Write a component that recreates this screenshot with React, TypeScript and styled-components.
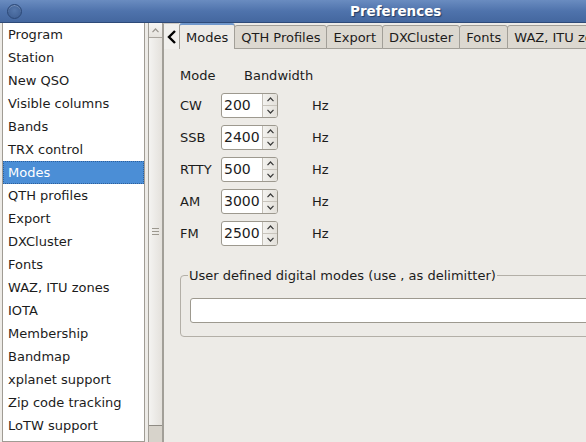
import styled, { createGlobalStyle } from "styled-components"

const GlobalStyle = createGlobalStyle`
  html, body {
    margin: 0;
    padding: 0;
    background: #edebe7;
    overflow: hidden;
  }
  body {
    font-family: "DejaVu Sans", "Liberation Sans", sans-serif;
    font-size: 13px;
    color: #1c1c1c;
  }
`

const pages = [
  "Program",
  "Station",
  "New QSO",
  "Visible columns",
  "Bands",
  "TRX control",
  "Modes",
  "QTH profiles",
  "Export",
  "DXCluster",
  "Fonts",
  "WAZ, ITU zones",
  "IOTA",
  "Membership",
  "Bandmap",
  "xplanet support",
  "Zip code tracking",
  "LoTW support",
]

const tabs = ["Modes", "QTH Profiles", "Export", "DXCluster", "Fonts", "WAZ, ITU zones"]

const modes = [
  { name: "CW", bw: "200" },
  { name: "SSB", bw: "2400" },
  { name: "RTTY", bw: "500" },
  { name: "AM", bw: "3000" },
  { name: "FM", bw: "2500" },
]

const Chevron = ({ up }: { up?: boolean }) => (
  <svg width="7" height="5" viewBox="0 0 7 5">
    <path
      d={up ? "M0.5 4.2 L3.5 1 L6.5 4.2" : "M0.5 0.8 L3.5 4 L6.5 0.8"}
      fill="none"
      stroke="#3a3a3a"
      strokeWidth="1.2"
    />
  </svg>
)

const App = () => {
  return (
    <Window>
      <GlobalStyle />
      <TitleBar>
        <MenuDot />
        <Title>Preferences</Title>
      </TitleBar>
      <Body>
        <PageList>
          {pages.map((p) => (
            <PageItem key={p} $selected={p === "Modes"}>
              {p}
            </PageItem>
          ))}
        </PageList>
        <ScrollBar>
          <ScrollButton>
            <Chevron up />
          </ScrollButton>
          <Thumb>
            <Grip>
              <span />
              <span />
              <span />
            </Grip>
          </Thumb>
          <Trough />
        </ScrollBar>
        <Notebook>
          <TabRow>
            <TabArrow>
              <svg width="10" height="14" viewBox="0 0 10 14">
                <path d="M8 1 L2 7 L8 13" fill="none" stroke="#000" strokeWidth="2.4" />
              </svg>
            </TabArrow>
            {tabs.map((t, i) => (
              <Tab key={t} $active={i === 0}>
                {t}
              </Tab>
            ))}
          </TabRow>
          <Panel>
            <HeaderRow>
              <HeadMode>Mode</HeadMode>
              <span>Bandwidth</span>
            </HeaderRow>
            <ModeGrid>
              {modes.map((m) => (
                <ModeRow key={m.name}>
                  <ModeLabel>{m.name}</ModeLabel>
                  <SpinBox>
                    <SpinInput>{m.bw}</SpinInput>
                    <SpinButtons>
                      <SpinHalf>
                        <Chevron up />
                      </SpinHalf>
                      <SpinHalf>
                        <Chevron />
                      </SpinHalf>
                    </SpinButtons>
                  </SpinBox>
                  <Unit>Hz</Unit>
                </ModeRow>
              ))}
            </ModeGrid>
            <Group>
              <legend>User defined digital modes (use , as delimitter)</legend>
              <TextField />
            </Group>
          </Panel>
        </Notebook>
      </Body>
    </Window>
  )
}

export default App

const Window = styled.div`
  width: 586px;
  height: 442px;
  display: flex;
  flex-direction: column;
  overflow: hidden;
  background: #edebe7;
`

const TitleBar = styled.div`
  height: 23px;
  flex: none;
  display: flex;
  align-items: center;
  padding-left: 7px;
  background: linear-gradient(#6a8cc0, #4f73ac 50%, #44679f 100%);
  border-bottom: 1px solid #2e4a78;
  box-sizing: border-box;
`

const MenuDot = styled.div`
  width: 13px;
  height: 13px;
  border-radius: 50%;
  background: radial-gradient(circle at 50% 40%, #5577ab, #3c5c90);
  border: 1px solid #2c4876;
  box-shadow: inset 0 1px 0 rgba(255, 255, 255, 0.25);
`

const Title = styled.div`
  margin-left: 328px;
  color: #fff;
  font-weight: bold;
  font-size: 13.5px;
  text-shadow: 1px 1px 1px #243d66;
`

const Body = styled.div`
  flex: 1;
  display: flex;
  min-height: 0;
`

const PageList = styled.div`
  width: 143px;
  margin-left: 2px;
  flex: none;
  background: #fff;
  border: 1px solid #a09c94;
  border-top: none;
  display: flex;
  flex-direction: column;
  box-sizing: border-box;
`

const PageItem = styled.div<{ $selected?: boolean }>`
  height: 23px;
  line-height: 23px;
  padding-left: 5px;
  white-space: nowrap;
  box-sizing: border-box;
  background: ${(p) => (p.$selected ? "#4b8ed6" : "transparent")};
  color: ${(p) => (p.$selected ? "#fff" : "#1c1c1c")};
  outline: ${(p) => (p.$selected ? "1px dotted #2d5f9a" : "none")};
  outline-offset: -1px;
`

const ScrollBar = styled.div`
  width: 13px;
  margin-left: 3px;
  flex: none;
  display: flex;
  flex-direction: column;
  border-left: 1px solid #a29f98;
  border-right: 1px solid #a29f98;
  background: #d7d3cb;
`

const ScrollButton = styled.div`
  height: 15px;
  display: flex;
  align-items: center;
  justify-content: center;
  background: linear-gradient(#f7f6f4, #e6e3de);
  border-bottom: 1px solid #aaa69f;
  box-sizing: border-box;
  svg path {
    stroke: #9a968f;
  }
`

const Thumb = styled.div`
  height: 388px;
  display: flex;
  align-items: center;
  justify-content: center;
  background: linear-gradient(90deg, #f4f3f1, #e4e1dc);
  border-bottom: 1px solid #8f8b84;
  box-sizing: border-box;
`

const Grip = styled.div`
  display: flex;
  flex-direction: column;
  gap: 2px;
  span {
    display: block;
    width: 7px;
    height: 1px;
    background: #9c988f;
  }
`

const Trough = styled.div`
  flex: 1;
`

const Notebook = styled.div`
  flex: 1;
  display: flex;
  flex-direction: column;
  min-width: 0;
`

const TabRow = styled.div`
  height: 26px;
  flex: none;
  display: flex;
  align-items: flex-end;
  white-space: nowrap;
`

const TabArrow = styled.div`
  width: 16px;
  height: 26px;
  flex: none;
  display: flex;
  align-items: center;
  justify-content: center;
  background: #f1f0ed;
  border-left: 1px solid #a29f98;
  border-top: 1px solid #cfcbc4;
  box-sizing: border-box;
`

const Tab = styled.div<{ $active?: boolean }>`
  flex: none;
  height: ${(p) => (p.$active ? "26px" : "24px")};
  line-height: ${(p) => (p.$active ? "26px" : "23px")};
  padding: 0 6px;
  box-sizing: border-box;
  background: ${(p) => (p.$active ? "#edebe7" : "#dcd8d0")};
  border: 1px solid #a29f98;
  border-bottom: ${(p) => (p.$active ? "none" : "1px solid #a29f98")};
  border-top: ${(p) => (p.$active ? "2px solid #6f97cc" : "1px solid #a29f98")};
  border-radius: 3px 3px 0 0;
  margin-right: -1px;
  color: #1c1c1c;
`

const Panel = styled.div`
  flex: 1;
  border-left: 1px solid #a29f98;
  padding: 17px 0 0 16px;
  display: flex;
  flex-direction: column;
`

const HeaderRow = styled.div`
  display: flex;
  height: 18px;
  align-items: center;
`

const HeadMode = styled.span`
  width: 64px;
`

const ModeGrid = styled.div`
  display: flex;
  flex-direction: column;
  gap: 7px;
  margin-top: 9px;
`

const ModeRow = styled.div`
  display: flex;
  align-items: center;
  height: 25px;
`

const ModeLabel = styled.span`
  width: 41px;
`

const SpinBox = styled.div`
  display: flex;
  height: 25px;
  width: 57px;
  border: 1px solid #9d998f;
  border-radius: 3px;
  background: #fff;
  box-sizing: border-box;
  overflow: hidden;
`

const SpinInput = styled.div`
  flex: 1;
  line-height: 23px;
  padding-left: 2px;
  font-size: 14px;
`

const SpinButtons = styled.div`
  width: 14px;
  display: flex;
  flex-direction: column;
  border-left: 1px solid #c3bfb7;
  background: linear-gradient(90deg, #f3f2ef, #e3e0da);
`

const SpinHalf = styled.div`
  flex: 1;
  display: flex;
  align-items: center;
  justify-content: center;
  & + & {
    border-top: 1px solid #c8c4bc;
  }
`

const Unit = styled.span`
  margin-left: 34px;
`

const Group = styled.fieldset`
  margin: 22px 0 0 0;
  width: 500px;
  padding: 15px 0 13px 9px;
  border: 1px solid #b3afa7;
  border-radius: 4px;
  box-sizing: border-box;
  legend {
    padding: 0 1px;
    margin-left: -2px;
    color: #1c1c1c;
  }
`

const TextField = styled.div`
  height: 25px;
  background: #fff;
  border: 1px solid #9d998f;
  border-radius: 3px;
  box-sizing: border-box;
`
